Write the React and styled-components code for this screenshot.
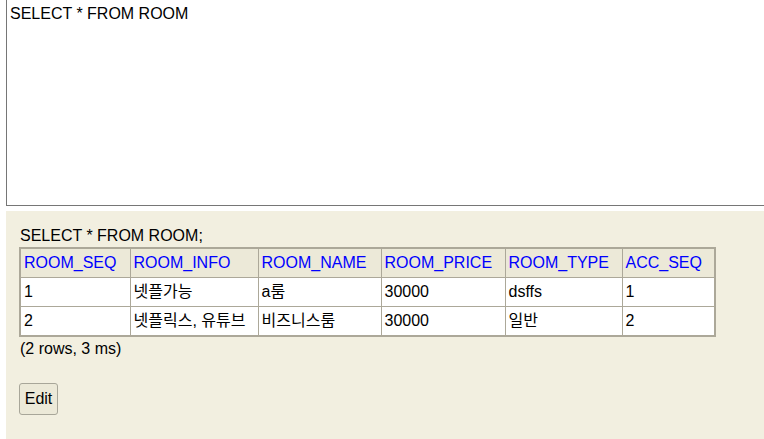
import React from "react";
import styled, { createGlobalStyle } from "styled-components";

const GlobalStyle = createGlobalStyle`
  html, body {
    margin: 0;
    padding: 0;
    background: #ffffff;
    overflow: hidden;
  }
  body {
    font-family: "Liberation Sans", Arial, "Noto Sans CJK KR", sans-serif;
    font-size: 16px;
    color: #000;
  }
`;

const columns = [
  { name: "ROOM_SEQ", width: 110 },
  { name: "ROOM_INFO", width: 128 },
  { name: "ROOM_NAME", width: 123 },
  { name: "ROOM_PRICE", width: 124 },
  { name: "ROOM_TYPE", width: 117 },
  { name: "ACC_SEQ", width: 93 },
];

const rows = [
  ["1", "넷플가능", "a룸", "30000", "dsffs", "1"],
  ["2", "넷플릭스, 유튜브", "비즈니스룸", "30000", "일반", "2"],
];

const App = () => {
  return (
    <Page>
      <GlobalStyle />
      <QueryBox defaultValue="SELECT * FROM ROOM" spellCheck={false} />
      <ResultPanel>
        <Statement>SELECT * FROM ROOM;</Statement>
        <ResultTable>
          <colgroup>
            {columns.map((c) => (
              <col key={c.name} style={{ width: c.width }} />
            ))}
          </colgroup>
          <thead>
            <tr>
              {columns.map((c) => (
                <HeadCell key={c.name}>{c.name}</HeadCell>
              ))}
            </tr>
          </thead>
          <tbody>
            {rows.map((r, i) => (
              <tr key={i}>
                {r.map((v, j) => (
                  <Cell key={j}>{v}</Cell>
                ))}
              </tr>
            ))}
          </tbody>
        </ResultTable>
        <Summary>(2 rows, 3 ms)</Summary>
        <EditButton type="button">Edit</EditButton>
      </ResultPanel>
    </Page>
  );
};

const Page = styled.div`
  padding-left: 6px;
  height: 439px;
  display: flex;
  flex-direction: column;
`;

// right edge of the textarea sits just outside the window
const QueryBox = styled.textarea`
  display: block;
  width: 759px;
  height: 206px;
  margin: 0;
  padding: 4px 3px;
  box-sizing: border-box;
  border: 1px solid #767676;
  border-top: none;
  font-family: "Liberation Sans", Arial, sans-serif;
  font-size: 16px;
  line-height: 19px;
  resize: none;
  outline: none;
  flex-shrink: 0;
`;

const ResultPanel = styled.div`
  margin-top: 5px;
  flex: 1;
  background: #f2efe0;
  padding: 15px 13px 0 13px;
`;

const Statement = styled.div`
  line-height: 19px;
  margin-left: 1px;
  margin-bottom: 2px;
`;

const ResultTable = styled.table`
  border-collapse: collapse;
  table-layout: fixed;
  border: 2px solid #aca899;
  background: #ffffff;
`;

const HeadCell = styled.th`
  background: #ece9d8;
  color: #0000ff;
  font-weight: normal;
  text-align: left;
  border: 1px solid #aca899;
  padding: 5px 2px 5px 3px;
  height: 18px;
  line-height: 18px;
  white-space: nowrap;
  overflow: hidden;
`;

const Cell = styled.td`
  border: 1px solid #aca899;
  padding: 5px 2px 5px 3px;
  height: 18px;
  line-height: 18px;
  white-space: nowrap;
  overflow: hidden;
`;

const Summary = styled.div`
  margin-top: 2px;
  line-height: 19px;
  margin-left: 1px;
`;

const EditButton = styled.button`
  display: block;
  margin-top: 25px;
  width: 39px;
  height: 32px;
  padding: 0;
  background: #ece9d8;
  border: 1px solid #a8a699;
  border-radius: 3px;
  font-family: "Liberation Sans", Arial, sans-serif;
  font-size: 16px;
  color: #000;
`;

export default App;
